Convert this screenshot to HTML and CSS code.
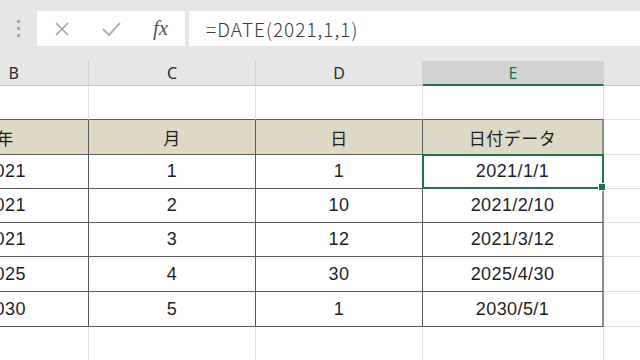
FILE: index.html
```html
<!DOCTYPE html>
<html lang="ja">
<head>
  <meta charset="UTF-8" />
  <title>DATE関数</title>
  <link rel="stylesheet" href="styles.css">
</head>
<body>
  <div class="formula-bar">
    <div class="grip"><span></span><span></span><span></span></div>
    <div class="name-tools">
      <svg class="icon" width="20" height="20" viewBox="0 0 20 20">
        <path d="M4 4 L16 16 M16 4 L4 16" stroke="#a3a3a3" stroke-width="1.6" fill="none"/>
      </svg>
      <svg class="icon" width="22" height="20" viewBox="0 0 22 20">
        <path d="M3 10 L9 16 L20 4" stroke="#b0b0b0" stroke-width="2" fill="none"/>
      </svg>
      <span class="fx">fx</span>
    </div>
    <div class="formula">=DATE(2021,1,1)</div>
  </div>

  <div class="sheet">
    <div class="grid">
      <div class="col-head">B</div>
      <div class="col-head">C</div>
      <div class="col-head">D</div>
      <div class="col-head active">E</div>
      <div class="col-head"></div>

      <div class="cell top"></div>
      <div class="cell top"></div>
      <div class="cell top"></div>
      <div class="cell top"></div>
      <div class="cell"></div>

      <div class="cell tbl th">年</div>
      <div class="cell tbl th">月</div>
      <div class="cell tbl th">日</div>
      <div class="cell tbl th last">日付データ</div>
      <div class="cell"></div>

      <div class="cell tbl">2021</div>
      <div class="cell tbl">1</div>
      <div class="cell tbl">1</div>
      <div class="cell tbl last selected">2021/1/1</div>
      <div class="cell"></div>

      <div class="cell tbl">2021</div>
      <div class="cell tbl">2</div>
      <div class="cell tbl">10</div>
      <div class="cell tbl last">2021/2/10</div>
      <div class="cell"></div>

      <div class="cell tbl">2021</div>
      <div class="cell tbl">3</div>
      <div class="cell tbl">12</div>
      <div class="cell tbl last">2021/3/12</div>
      <div class="cell"></div>

      <div class="cell tbl">2025</div>
      <div class="cell tbl">4</div>
      <div class="cell tbl">30</div>
      <div class="cell tbl last">2025/4/30</div>
      <div class="cell"></div>

      <div class="cell tbl">2030</div>
      <div class="cell tbl">5</div>
      <div class="cell tbl">1</div>
      <div class="cell tbl last">2030/5/1</div>
      <div class="cell"></div>

      <div class="cell"></div>
      <div class="cell"></div>
      <div class="cell"></div>
      <div class="cell"></div>
      <div class="cell"></div>
    </div>
  </div>
</body>
</html>
```

FILE: styles.css
```css
* {
  box-sizing: border-box;
  margin: 0;
  padding: 0;
}

body {
  width: 640px;
  height: 360px;
  overflow: hidden;
  background: #ffffff;
  font-family: "Liberation Sans", "Noto Sans CJK JP", sans-serif;
}

/* formula bar */
.formula-bar {
  height: 61px;
  background: #e6e6e6;
  display: flex;
  align-items: center;
  padding: 0 0 4px 0;
}

.grip {
  width: 37px;
  display: flex;
  flex-direction: column;
  align-items: center;
  gap: 4px;
}

.grip span {
  width: 3px;
  height: 3px;
  background: #a8a8a8;
}

.name-tools {
  width: 148px;
  height: 35px;
  background: #ffffff;
  display: flex;
  align-items: center;
  padding-left: 15px;
  gap: 28px;
}

.icon {
  display: block;
}

.fx {
  font-family: "Liberation Serif", serif;
  font-style: italic;
  font-size: 21px;
  color: #555555;
  margin-left: 3px;
}

.formula {
  flex: 1;
  height: 35px;
  margin-left: 4px;
  background: #ffffff;
  padding-left: 17px;
  font-family: "Noto Sans CJK JP", sans-serif;
  font-weight: 300;
  font-size: 19px;
  letter-spacing: 1px;
  line-height: 35px;
  color: #3a3a3a;
}

/* sheet */
.sheet {
  overflow: hidden;
  height: 299px;
}

.grid {
  display: grid;
  grid-template-columns: 167px 167px 167px 181px 60px;
  grid-template-rows: 25px 34px 35px 34px 34px 34px 35px 35px 40px;
  margin-left: -78px;
}

.col-head {
  background: #e6e6e6;
  border-right: 1px solid #cfcfcf;
  border-bottom: 1px solid #c6c6c6;
  font-family: "Noto Sans", sans-serif;
  font-size: 16px;
  color: #2b2b2b;
  display: flex;
  align-items: center;
  justify-content: center;
}

.col-head:first-child {
  justify-content: flex-end;
  padding-right: 69px;
}

.col-head.active {
  background: #d2d2d2;
  color: #217346;
  border-bottom: 2px solid #217346;
}

.cell {
  border-right: 1px solid #e1e1e1;
  border-bottom: 1px solid #e1e1e1;
  display: flex;
  align-items: center;
  justify-content: center;
  font-size: 18px;
  letter-spacing: 0.4px;
  color: #1e1e1e;
}

.cell.top {
  border-bottom: 1px solid #5a5a5a;
}

.cell.tbl {
  border-right: 1px solid #5a5a5a;
  border-bottom: 1px solid #5a5a5a;
}

.cell.last {
  border-right: 2px solid #8c8c8c;
}

.cell.th {
  background: #ddd9c4;
  font-family: "Noto Sans CJK JP", sans-serif;
  font-size: 17px;
  letter-spacing: 0.5px;
}

.selected {
  position: relative;
}

.selected::after {
  content: "";
  position: absolute;
  left: -1px;
  top: -1px;
  right: -2px;
  bottom: -1px;
  border: 2px solid #217346;
}

.selected::before {
  content: "";
  position: absolute;
  right: -4px;
  bottom: -3px;
  width: 6px;
  height: 6px;
  background: #217346;
  border: 1px solid #ffffff;
  z-index: 1;
}
```
